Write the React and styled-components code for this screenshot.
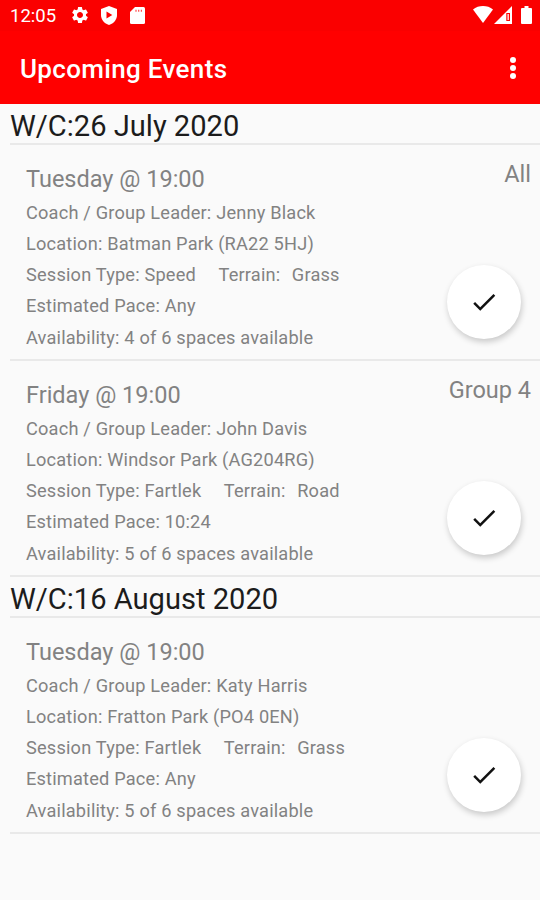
import React from 'react'
import styled, { createGlobalStyle } from 'styled-components'
import { MdSettings, MdCheck } from 'react-icons/md'

const weeks = [
  {
    title: 'W/C:26 July 2020',
    events: [
      {
        time: 'Tuesday @ 19:00',
        group: 'All',
        leader: 'Jenny Black',
        location: 'Batman Park (RA22 5HJ)',
        session: 'Speed',
        terrain: 'Grass',
        pace: 'Any',
        spaces: 4,
      },
      {
        time: 'Friday @ 19:00',
        group: 'Group 4',
        leader: 'John Davis',
        location: 'Windsor Park (AG204RG)',
        session: 'Fartlek',
        terrain: 'Road',
        pace: '10:24',
        spaces: 5,
      },
    ],
  },
  {
    title: 'W/C:16 August 2020',
    events: [
      {
        time: 'Tuesday @ 19:00',
        leader: 'Katy Harris',
        location: 'Fratton Park (PO4 0EN)',
        session: 'Fartlek',
        terrain: 'Grass',
        pace: 'Any',
        spaces: 5,
      },
    ],
  },
]

const ShieldIcon = () =>
  <svg width="16" height="19" viewBox="0 0 16 19">
    <path fill="#fff" d="M8 0 0 3v6c0 4.600 3.300 8.600 8 10 4.700-1.400 8-5.400 8-10V3z" />
    <path fill="#f00" d="M5.500 5.500v7l5.800-3.500z" />
  </svg>

const CardIcon = () =>
  <svg width="15" height="17" viewBox="0 0 15 17">
    <path fill="#fff" d="M5 0h8.500A1.500 1.500 0 0 1 15 1.500v14a1.500 1.500 0 0 1-1.500 1.500h-12A1.500 1.500 0 0 1 0 15.500V5z" />
    <path stroke="#f00" strokeOpacity="0.7" strokeWidth="1.200" d="M6 2.800v2M8.700 2.800v2M11.400 2.800v2" />
  </svg>

const WifiIcon = () =>
  <svg width="20" height="17" viewBox="0 0 20 17">
    <path fill="#fff" d="M0 3.500C5.500-1.100 14.500-1.100 20 3.500L10 17z" />
  </svg>

const SignalIcon = () =>
  <svg width="18" height="18" viewBox="0 0 18 18">
    <path fill="#fff" d="M0 18 18 0v18z" />
    <path fill="none" stroke="#f00" strokeWidth="1.200" d="M15.400 7.500h-2.500v7h2.500z" />
  </svg>

const BatteryIcon = () =>
  <svg width="11" height="18" viewBox="0 0 11 18">
    <path fill="#fff" d="M3.500 0h4v2H10a1 1 0 0 1 1 1v14a1 1 0 0 1-1 1H1a1 1 0 0 1-1-1V3a1 1 0 0 1 1-1h2.500z" />
  </svg>

const Event = ({ time, group, leader, location, session, terrain, pace, spaces }) =>
  <EventRow>
    <Details>
      <Time>{time}</Time>
      <Line>Coach / Group Leader: {leader}</Line>
      <Line>Location: {location}</Line>
      <Line>
        <Session>Session Type: {session}</Session>
        <Terrain>Terrain:</Terrain>
        <span>{terrain}</span>
      </Line>
      <Line>Estimated Pace: {pace}</Line>
      <Line>Availability: {spaces} of 6 spaces available</Line>
    </Details>
    <Side>
      <Group>{group}</Group>
      <CheckButton aria-label="Attend">
        <MdCheck size={30} />
      </CheckButton>
    </Side>
  </EventRow>

const App = () =>
  <Screen>
    <GlobalStyle />
    <StatusBar>
      <Clock>12:05</Clock>
      <Notifications>
        <MdSettings size={20} />
        <ShieldIcon />
        <CardIcon />
      </Notifications>
      <Indicators>
        <WifiIcon />
        <SignalIcon />
        <BatteryIcon />
      </Indicators>
    </StatusBar>
    <Toolbar>
      <Title>Upcoming Events</Title>
      <MenuButton aria-label="More options">
        <Dot />
        <Dot />
        <Dot />
      </MenuButton>
    </Toolbar>
    {
      weeks.map(({ title, events }) =>
        <section key={title}>
          <WeekTitle>{title}</WeekTitle>
          {events.map(event => <Event key={event.time} {...event} />)}
        </section>
      )
    }
  </Screen>

export default App

const GlobalStyle = createGlobalStyle`
  * {
    box-sizing: border-box;
  }

  body {
    margin: 0;
    background: #FAFAFA;
    font-family: Roboto, sans-serif;
  }
`

const Screen = styled.div`
  width: 540px;
  height: 900px;
  overflow: hidden;
  background: #FAFAFA;
`

const StatusBar = styled.div`
  display: flex;
  align-items: center;
  height: 31px;
  padding: 0 8px 2px 10px;
  background: #FA0000;
  color: #fff;
`

const Clock = styled.span`
  width: 60px;
  padding-top: 2px;
  font-size: 18.5px;
`

const Notifications = styled.div`
  display: flex;
  align-items: center;
  gap: 12px;
  padding-top: 1px;

  svg:nth-child(2) {
    margin: 0 1px 0 -1px;
  }
`

const Indicators = styled.div`
  display: flex;
  align-items: center;
  margin-left: auto;

  svg:nth-child(2) {
    margin: 0 9px 0 1px;
  }
`

const Toolbar = styled.header`
  display: flex;
  align-items: center;
  justify-content: space-between;
  height: 73px;
  padding: 2px 24px 0 20px;
  background: #FF0000;
  color: #fff;
`

const Title = styled.h1`
  margin: 0;
  font-size: 26px;
  font-weight: 500;
  letter-spacing: 0.33px;
`

const MenuButton = styled.button`
  display: flex;
  flex-direction: column;
  gap: 2px;
  padding: 0 0 2px;
  border: 0;
  background: none;
`

const Dot = styled.span`
  width: 6px;
  height: 6px;
  border-radius: 50%;
  background: #fff;
`

const WeekTitle = styled.h2`
  height: 41px;
  margin: 0 0 0 10px;
  border-bottom: 2px solid #E9E9E9;
  font-size: 29.1px;
  font-weight: 400;
  line-height: 44px;
  color: #1C1C1C;
`

const EventRow = styled.article`
  display: flex;
  justify-content: space-between;
  height: 216px;
  margin-left: 10px;
  padding: 17px 9px 0 16px;
  border-bottom: 2px solid #E9E9E9;
  color: #828282;
`

const Details = styled.div`
  white-space: nowrap;
`

const Time = styled.div`
  height: 34.500px;
  font-size: 23.5px;
  line-height: 34px;
`

const Line = styled.div`
  display: flex;
  height: 31.250px;
  font-size: 18.2px;
  letter-spacing: 0.19px;
  line-height: 31px;
  white-space: pre;
`

const Session = styled.span`
  margin-right: 22.500px;
`

const Terrain = styled.span`
  margin-right: 11.500px;
`

const Side = styled.div`
  display: flex;
  flex-direction: column;
  align-items: flex-end;
  justify-content: space-between;
  padding-bottom: 20px;
`

const Group = styled.div`
  height: 24px;
  font-size: 23.5px;
  line-height: 24px;
`

const CheckButton = styled.button`
  display: flex;
  align-items: center;
  justify-content: center;
  width: 74px;
  height: 74px;
  margin-right: 10px;
  padding: 0;
  border: 0;
  border-radius: 50%;
  background: #fff;
  box-shadow: 1px 3px 6px rgba(0, 0, 0, 0.2);
  color: #111;
`
